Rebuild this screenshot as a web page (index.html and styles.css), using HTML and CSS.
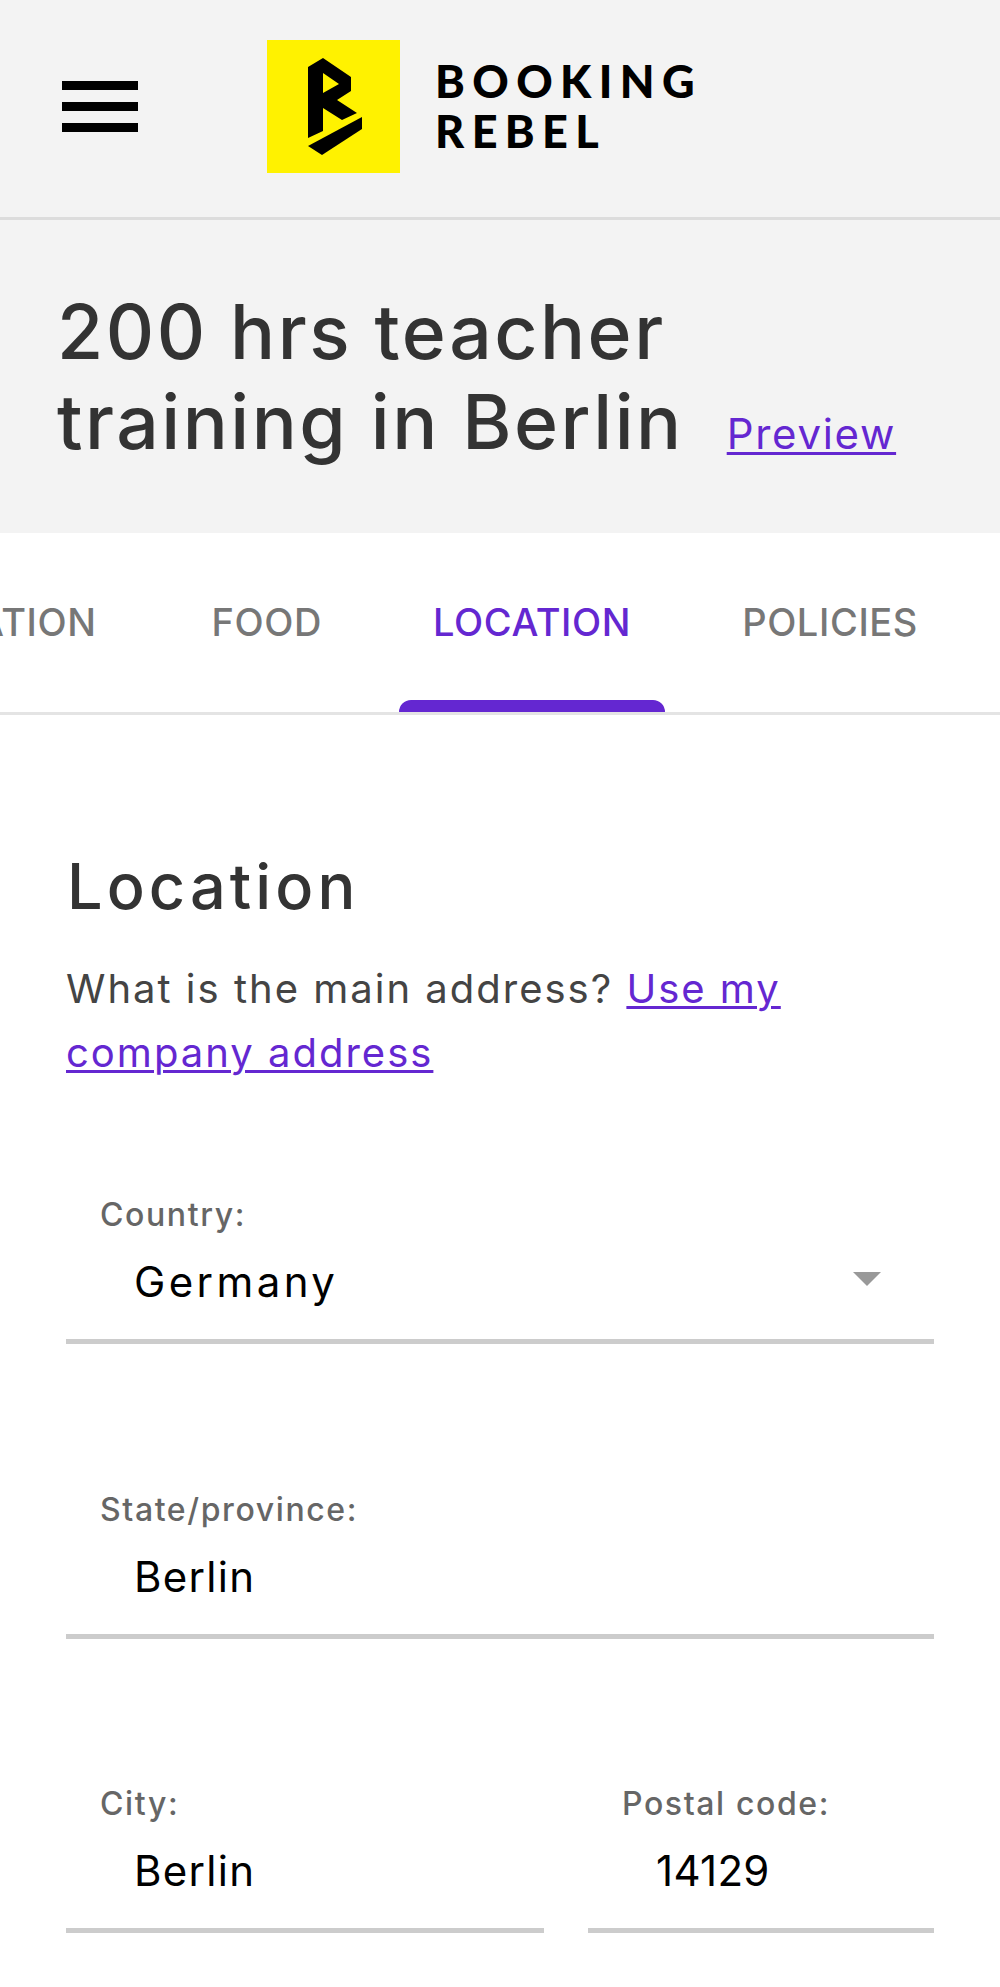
FILE: index.html
```html
<!DOCTYPE html>
<html lang="en">
<head>
    <meta charset="UTF-8">
    <meta name="viewport" content="width=device-width, initial-scale=1.0">
    <title>Location - Booking Rebel</title>
    <link rel="stylesheet" href="styles.css">
</head>
<body>
    <header class="topbar">
        <div class="menu-icon">
            <span></span>
            <span></span>
            <span></span>
        </div>
        <svg class="logo-mark" viewBox="0 0 133 133" xmlns="http://www.w3.org/2000/svg">
            <rect width="133" height="133" fill="#fff200"/>
            <path fill="#000" fill-rule="evenodd" d="M41 27 L56 18 L84 37 L84 51 L70 60 L90 73 L75 80 L56 68 L56 91 L41 98 Z M56 33 L56 53 L72 44 Z"/>
            <path fill="#000" d="M41 106 L95 77 L95 89 L55 115 Z"/>
        </svg>
        <div class="logo-text">BOOKING<br>REBEL</div>
    </header>

    <div class="title-band">
        <h1>200 hrs teacher<br>training in Berlin</h1>
        <a href="#" class="preview-link">Preview</a>
    </div>

    <nav class="tabs">
        <a href="#" class="tab">ACCOMMODATION</a>
        <a href="#" class="tab">FOOD</a>
        <a href="#" class="tab active">LOCATION</a>
        <a href="#" class="tab">POLICIES</a>
    </nav>

    <main class="content">
        <h2>Location</h2>
        <p class="intro">What is the main address? <a href="#">Use my company address</a></p>

        <div class="field country">
            <label>Country:</label>
            <div class="value">Germany<span class="arrow"></span></div>
        </div>

        <div class="field">
            <label>State/province:</label>
            <div class="value">Berlin</div>
        </div>

        <div class="field-row">
            <div class="field city">
                <label>City:</label>
                <div class="value">Berlin</div>
            </div>
            <div class="field postal">
                <label>Postal code:</label>
                <div class="value">14129</div>
            </div>
        </div>
    </main>
</body>
</html>
```

FILE: styles.css
```css
* {
    box-sizing: border-box;
}
html, body {
    margin: 0;
    padding: 0;
}
body {
    font-family: Inter, "Open Sans", sans-serif;
    background-color: #fff;
    height: 1987px;
    overflow: hidden;
}
a {
    color: #6427d1;
    text-decoration-thickness: 3px;
    text-underline-offset: 3px;
}
.topbar {
    display: flex;
    align-items: flex-start;
    height: 220px;
    padding-top: 40px;
    padding-left: 62px;
    background-color: #f3f3f3;
    border-bottom: 3px solid #dcdcdc;
}
.menu-icon {
    display: flex;
    flex-direction: column;
    gap: 12px;
    width: 76px;
    margin-top: 41px;
}
.menu-icon span {
    height: 9px;
    background-color: #000;
}
.logo-mark {
    width: 133px;
    height: 133px;
    margin-left: 129px;
}
.logo-text {
    margin-left: 35px;
    margin-top: 16px;
    font-family: Lato, sans-serif;
    font-size: 45px;
    line-height: 50px;
    font-weight: 900;
    letter-spacing: 7.4px;
    color: #000;
}
.title-band {
    display: flex;
    align-items: flex-end;
    height: 313px;
    padding: 0 0 66px 57px;
    background-color: #f3f3f3;
}
h1 {
    margin: 0;
    font-size: 75px;
    line-height: 90px;
    font-weight: 500;
    letter-spacing: 2.5px;
    color: #333;
}
.preview-link {
    margin-left: 43px;
    margin-bottom: 8px;
    font-size: 42px;
    letter-spacing: 1.7px;
}
.tabs {
    display: flex;
    justify-content: flex-end;
    gap: 43px;
    height: 182px;
    padding-right: 48px;
    overflow: hidden;
    border-bottom: 3px solid #e4e4e4;
}
.tab {
    position: relative;
    flex-shrink: 0;
    padding: 0 34px;
    line-height: 178px;
    font-size: 38px;
    font-weight: 500;
    letter-spacing: 0.6px;
    color: #777;
    text-decoration: none;
}
.tab:first-child {
    margin-right: 4px;
}
.tab.active {
    color: #6427d1;
}
.tab.active::after {
    content: "";
    position: absolute;
    left: 0;
    right: 0;
    bottom: 0;
    height: 12px;
    background-color: #6427d1;
    border-radius: 12px 12px 0 0;
}
.content {
    padding: 131px 66px 0;
}
h2 {
    margin: 0 0 0 1px;
    font-size: 63px;
    line-height: 80px;
    font-weight: 500;
    letter-spacing: 4.1px;
    color: #333;
}
.intro {
    margin: 31px 0 110px;
    max-width: 760px;
    font-size: 40px;
    line-height: 64px;
    letter-spacing: 2px;
    color: #444;
}
.field {
    margin-bottom: 145.5px;
}
.field label {
    display: block;
    margin-bottom: 17px;
    padding-left: 34px;
    font-size: 32px;
    line-height: 40px;
    font-weight: 500;
    letter-spacing: 1.6px;
    color: #666;
}
.field .value {
    position: relative;
    padding: 0 0 27px 68px;
    font-size: 42px;
    line-height: 60px;
    letter-spacing: 1.3px;
    color: #000;
    border-bottom: 5px solid #ccc;
}
.country .value {
    letter-spacing: 3.4px;
}
.postal .value {
    letter-spacing: 0.3px;
}
.arrow {
    position: absolute;
    right: 53px;
    top: 20px;
    border-left: 14px solid transparent;
    border-right: 14px solid transparent;
    border-top: 14px solid #999;
}
.field-row {
    display: flex;
    gap: 44px;
}
.city {
    width: 478px;
}
.postal {
    width: 346px;
}
```
